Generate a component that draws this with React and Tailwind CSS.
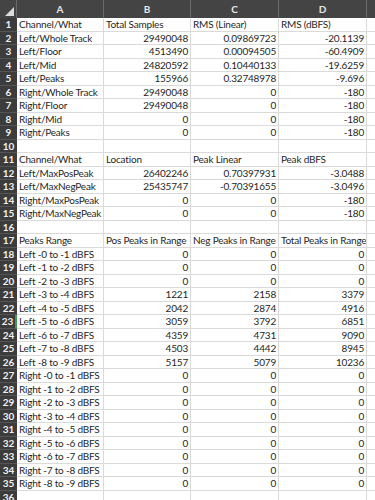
import React from 'react'

const COLS = [
  { key: 'A', w: 87 },
  { key: 'B', w: 87 },
  { key: 'C', w: 88 },
  { key: 'D', w: 88 },
]

const t = s => ({ v: s, text: true })

const rows = [
  [t('Channel/What'), t('Total Samples'), t('RMS (Linear)'), t('RMS (dBFS)')],
  [t('Left/Whole Track'), '29490048', '0.09869723', '-20.1139'],
  [t('Left/Floor'), '4513490', '0.00094505', '-60.4909'],
  [t('Left/Mid'), '24820592', '0.10440133', '-19.6259'],
  [t('Left/Peaks'), '155966', '0.32748978', '-9.696'],
  [t('Right/Whole Track'), '29490048', '0', '-180'],
  [t('Right/Floor'), '29490048', '0', '-180'],
  [t('Right/Mid'), '0', '0', '-180'],
  [t('Right/Peaks'), '0', '0', '-180'],
  [],
  [t('Channel/What'), t('Location'), t('Peak Linear'), t('Peak dBFS')],
  [t('Left/MaxPosPeak'), '26402246', '0.70397931', '-3.0488'],
  [t('Left/MaxNegPeak'), '25435747', '-0.70391655', '-3.0496'],
  [t('Right/MaxPosPeak'), '0', '0', '-180'],
  [t('Right/MaxNegPeak'), '0', '0', '-180'],
  [],
  [t('Peaks Range'), t('Pos Peaks in Range'), t('Neg Peaks in Range'), t('Total Peaks in Range')],
  [t('Left -0 to -1 dBFS'), '0', '0', '0'],
  [t('Left -1 to -2 dBFS'), '0', '0', '0'],
  [t('Left -2 to -3 dBFS'), '0', '0', '0'],
  [t('Left -3 to -4 dBFS'), '1221', '2158', '3379'],
  [t('Left -4 to -5 dBFS'), '2042', '2874', '4916'],
  [t('Left -5 to -6 dBFS'), '3059', '3792', '6851'],
  [t('Left -6 to -7 dBFS'), '4359', '4731', '9090'],
  [t('Left -7 to -8 dBFS'), '4503', '4442', '8945'],
  [t('Left -8 to -9 dBFS'), '5157', '5079', '10236'],
  [t('Right -0 to -1 dBFS'), '0', '0', '0'],
  [t('Right -1 to -2 dBFS'), '0', '0', '0'],
  [t('Right -2 to -3 dBFS'), '0', '0', '0'],
  [t('Right -3 to -4 dBFS'), '0', '0', '0'],
  [t('Right -4 to -5 dBFS'), '0', '0', '0'],
  [t('Right -5 to -6 dBFS'), '0', '0', '0'],
  [t('Right -6 to -7 dBFS'), '0', '0', '0'],
  [t('Right -7 to -8 dBFS'), '0', '0', '0'],
  [t('Right -8 to -9 dBFS'), '0', '0', '0'],
  [],
]

function Cell({ cell, w }) {
  const isText = cell && typeof cell === 'object'
  const value = isText ? cell.v : cell
  return (
    <div
      className={`h-full shrink-0 border-r border-b border-[#dadada] px-[2px] flex items-center whitespace-nowrap overflow-hidden tracking-[-0.2px] ${isText ? 'justify-start' : 'justify-end'}`}
      style={{ width: w }}
    >
      {value}
    </div>
  )
}

export default function App() {
  return (
    <div
      className="w-[375px] h-[500px] overflow-hidden bg-white text-[#1f1f1f] text-[10px] leading-none"
      style={{ fontFamily: 'Lato, "Open Sans", sans-serif' }}
    >
      {/* column header */}
      <div className="flex h-[18px] bg-[#444444] text-[#e6e6e6] text-[10px] font-bold">
        <div className="relative w-[17px] shrink-0 border-r border-[#6a6a6a]">
          <div className="absolute right-[2px] bottom-[2px] w-0 h-0 border-l-[9px] border-l-transparent border-b-[9px] border-b-[#dcdcdc]" />
        </div>
        {COLS.map(c => (
          <div
            key={c.key}
            className="shrink-0 flex items-center justify-center border-r border-[#6a6a6a]"
            style={{ width: c.w }}
          >
            {c.key}
          </div>
        ))}
        <div className="flex-1" />
      </div>

      {rows.map((r, i) => (
        <div key={i} className="flex h-[13.5px]">
          <div
            className={`relative w-[17px] shrink-0 bg-[#3c3c3c] text-[#f0f0f0] text-[10px] font-bold flex items-center justify-center border-b border-[#555555] ${i === 22 ? 'border-r-2 border-r-[#3a9b4f]' : ''}`}
          >
            {i + 1}
          </div>
          {COLS.map((c, j) => (
            <Cell key={c.key} cell={r[j]} w={c.w} />
          ))}
          <div className="flex-1 border-b border-[#dadada]" />
        </div>
      ))}
    </div>
  )
}
